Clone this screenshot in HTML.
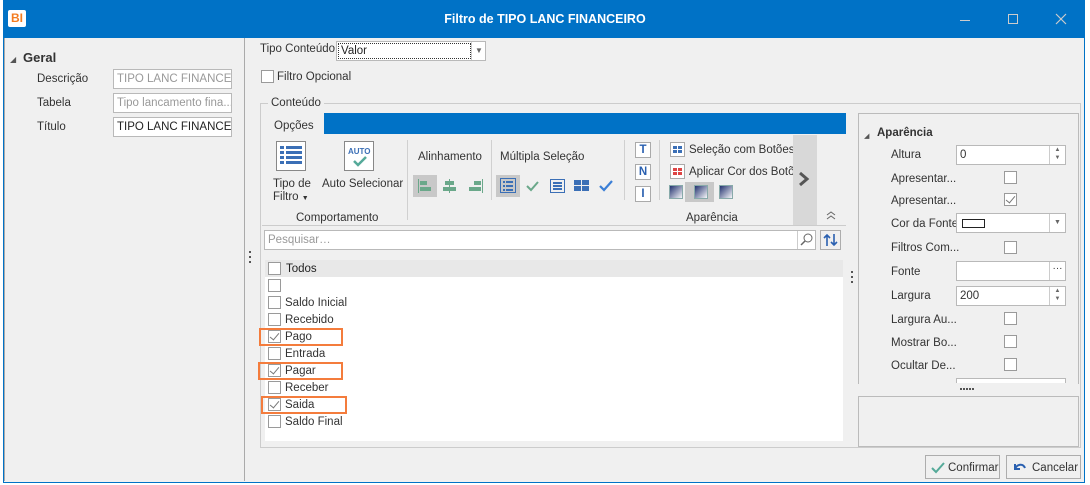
<!DOCTYPE html>
<html><head><meta charset="utf-8"><style>
*{box-sizing:border-box;margin:0;padding:0}
body{width:1090px;height:485px;position:relative;background:#fff;font-family:"Liberation Sans",sans-serif;font-size:11.5px;color:#333;overflow:hidden}
.a{position:absolute}
.t{position:absolute;white-space:nowrap;line-height:14px}
.inp{position:absolute;background:#fff;border:1px solid #b9b9b9;height:20px;overflow:hidden}
.cb{position:absolute;width:13px;height:13px;border:1px solid #9a9a9a;background:#fff}
.ck::after{content:"";position:absolute;left:3px;top:0px;width:4px;height:8px;border:solid #777;border-width:0 1.5px 1.5px 0;transform:rotate(40deg)}
.sep{position:absolute;width:1px;background:#d0d0d0}
.ob{position:absolute;border:2px solid #f47c3c}
.btn{position:absolute;border:1px solid #adadad;background:#f0f0f0}
</style></head><body>
<div class="a" style="left:3px;top:0;width:1082px;height:483px;background:#f0f0f0;border:1px solid #0072c6"></div>
<div class="a" style="left:3px;top:0;width:1082px;height:38px;background:#0072c6"></div>
<div class="a" style="left:8px;top:10px;width:18px;height:17px;background:#fff;border-radius:2px;color:#f47c20;font-weight:bold;font-size:12px;line-height:17px;text-align:center">BI</div>
<div class="t" style="left:0;width:1090px;text-align:center;top:12px;color:#fff;font-weight:bold;font-size:12.5px">Filtro de TIPO LANC FINANCEIRO</div>
<div class="a" style="left:960px;top:20px;width:10px;height:1px;background:#ccc"></div>
<div class="a" style="left:1008px;top:14px;width:10px;height:10px;border:1px solid #ccc"></div>
<svg class="a" style="left:1055px;top:13px" width="12" height="12"><path d="M1 1L11 11M11 1L1 11" stroke="#ccc" stroke-width="1.2"/></svg>
<div class="a" style="left:4px;top:38px;width:241px;height:443px;border-right:1px solid #aaa;border-left:1px solid #aaa"></div>
<div class="t" style="left:10px;top:53px;font-size:8px;color:#555">◢</div>
<div class="t" style="left:23px;top:51px;font-weight:bold;font-size:13px">Geral</div>
<div class="t" style="left:37px;top:72px">Descrição</div>
<div class="t" style="left:37px;top:96px">Tabela</div>
<div class="t" style="left:37px;top:120px">Título</div>
<div class="inp" style="left:113px;top:69px;width:119px"><span class="t" style="left:3px;top:2px;color:#999">TIPO LANC FINANCE...</span></div>
<div class="inp" style="left:113px;top:93px;width:119px"><span class="t" style="left:3px;top:2px;color:#999">Tipo lancamento fina...</span></div>
<div class="inp" style="left:113px;top:117px;width:119px"><span class="t" style="left:3px;top:2px;color:#222">TIPO LANC FINANCE...</span></div>
<div class="t" style="left:260px;top:42px">Tipo Conteúdo</div>
<div class="inp" style="left:336px;top:41px;width:150px;height:20px"><div class="a" style="left:1px;top:1px;width:133px;height:16px;border:1px dotted #333"></div><span class="t" style="left:4px;top:2px;color:#222">Valor</span><div class="a" style="left:134px;top:0;width:1px;height:18px;background:#ccc"></div><span class="t" style="left:138px;top:2px;font-size:8px;color:#666">▼</span></div>
<div class="cb" style="left:261px;top:70px"></div>
<div class="t" style="left:277px;top:70px">Filtro Opcional</div>
<div class="a" style="left:260px;top:103px;width:821px;height:345px;border:1px solid #ccc"></div>
<div class="t" style="left:268px;top:96px;background:#f0f0f0;padding:0 3px">Conteúdo</div>
<div class="t" style="left:274px;top:119px">Opções</div>
<div class="a" style="left:324px;top:113px;width:522px;height:21px;background:#0072c6"></div>
<div class="a" style="left:262px;top:225px;width:584px;height:1px;background:#ccc"></div>
<div class="a" style="left:276px;top:141px;width:30px;height:30px;border:1px solid #888;background:#fff">
<svg width="28" height="28"><g fill="#3b6fb6"><rect x="3" y="4" width="4" height="3"/><rect x="9" y="4" width="16" height="3"/><rect x="3" y="9" width="4" height="3"/><rect x="9" y="9" width="16" height="3"/><rect x="3" y="14" width="4" height="3"/><rect x="9" y="14" width="16" height="3"/><rect x="3" y="19" width="4" height="3"/><rect x="9" y="19" width="16" height="3"/></g></svg></div>
<div class="t" style="left:273px;top:177px">Tipo de</div>
<div class="t" style="left:273px;top:190px">Filtro <span style="font-size:7px">▼</span></div>
<div class="a" style="left:344px;top:141px;width:30px;height:30px;border:1px solid #888;background:#fff"><span class="t" style="left:3px;top:3px;font-size:8px;font-weight:bold;color:#3b6fb6">AUTO</span><svg class="a" style="left:7px;top:13px" width="16" height="12"><path d="M2 6l4 4 8-8" stroke="#5a9" stroke-width="2.5" fill="none"/></svg></div>
<div class="t" style="left:322px;top:177px">Auto Selecionar</div>
<div class="t" style="left:296px;top:211px">Comportamento</div>
<div class="sep" style="left:407px;top:140px;height:80px"></div>
<div class="t" style="left:418px;top:150px">Alinhamento</div>
<div class="a" style="left:413px;top:175px;width:24px;height:22px;background:#c8c8c8"></div>
<svg class="a" style="left:413px;top:175px" width="75" height="22"><g fill="#6aa88a"><rect x="5" y="4" width="1" height="14"/><rect x="7" y="6" width="7" height="4"/><rect x="7" y="12" width="11" height="4"/><rect x="36" y="4" width="1" height="14"/><rect x="32" y="6" width="9" height="4"/><rect x="30" y="12" width="13" height="4"/><rect x="69" y="4" width="1" height="14"/><rect x="61" y="6" width="7" height="4"/><rect x="56" y="12" width="12" height="4"/></g></svg>
<div class="sep" style="left:491px;top:140px;height:60px"></div>
<div class="t" style="left:500px;top:150px">Múltipla Seleção</div>
<div class="a" style="left:496px;top:175px;width:24px;height:22px;background:#c8c8c8"></div>
<svg class="a" style="left:496px;top:175px" width="125" height="22"><g fill="none" stroke="#3b6fb6"><rect x="4.5" y="3.5" width="15" height="14"/></g><g fill="#3b6fb6"><rect x="7" y="6" width="2" height="2"/><rect x="10" y="6" width="7" height="2"/><rect x="7" y="10" width="2" height="2"/><rect x="10" y="10" width="7" height="2"/><rect x="7" y="14" width="2" height="2"/><rect x="10" y="14" width="7" height="2"/></g><path d="M31 11l4 4 7-8" stroke="#6aa88a" stroke-width="2" fill="none"/><rect x="54.5" y="4.5" width="14" height="13" fill="none" stroke="#3b6fb6"/><g fill="#3b6fb6"><rect x="57" y="7" width="9" height="2"/><rect x="57" y="10" width="9" height="2"/><rect x="57" y="13" width="9" height="2"/><rect x="78" y="5" width="7" height="5"/><rect x="86" y="5" width="7" height="5"/><rect x="78" y="11" width="7" height="5"/><rect x="86" y="11" width="7" height="5"/></g><path d="M104 11l4 4 8-9" stroke="#3b7fd6" stroke-width="2.2" fill="none"/></svg>
<div class="sep" style="left:624px;top:140px;height:60px"></div>
<div class="a" style="left:635px;top:142px;width:16px;height:16px;border:1px solid #aaa;background:#fff;color:#2a60b0;font-weight:bold;text-align:center;line-height:14px">T</div>
<div class="a" style="left:635px;top:164px;width:16px;height:16px;border:1px solid #aaa;background:#fff;color:#2a60b0;font-weight:bold;text-align:center;line-height:14px">N</div>
<div class="a" style="left:635px;top:186px;width:16px;height:16px;border:1px solid #aaa;background:#fff;color:#2a60b0;font-weight:bold;text-align:center;line-height:14px">I</div>
<div class="sep" style="left:659px;top:140px;height:60px"></div>
<svg class="a" style="left:670px;top:142px" width="16" height="40"><rect x="0.5" y="0.5" width="14" height="14" fill="#fff" stroke="#aaa"/><g fill="#3b6fb6"><rect x="3" y="4" width="4" height="3"/><rect x="8" y="4" width="4" height="3"/><rect x="3" y="8" width="4" height="3"/><rect x="8" y="8" width="4" height="3"/></g><rect x="0.5" y="22.5" width="14" height="14" fill="#fff" stroke="#aaa"/><g fill="#d44"><rect x="3" y="26" width="4" height="3"/><rect x="8" y="26" width="4" height="3"/><rect x="3" y="30" width="4" height="3"/><rect x="8" y="30" width="4" height="3"/></g></svg>
<div class="t" style="left:689px;top:143px">Seleção com Botões</div>
<div class="t" style="left:689px;top:165px;width:104px;overflow:hidden">Aplicar Cor dos Botões</div>
<div class="a" style="left:685px;top:182px;width:29px;height:20px;background:#c8c8c8"></div>
<svg class="a" style="left:668px;top:184px" width="70" height="16"><defs><linearGradient id="g" x1="0" y1="0" x2="1" y2="1"><stop offset="0" stop-color="#1a2a6a"/><stop offset="1" stop-color="#fff"/></linearGradient></defs><rect x="1.5" y="1.5" width="13" height="13" fill="url(#g)" stroke="#8aa"/><rect x="26.5" y="1.5" width="13" height="13" fill="url(#g)" stroke="#8aa"/><rect x="51.5" y="1.5" width="13" height="13" fill="url(#g)" stroke="#8aa"/></svg>
<div class="t" style="left:686px;top:211px">Aparência</div>
<div class="a" style="left:793px;top:135px;width:24px;height:90px;background:#d8d8d8"></div>
<svg class="a" style="left:798px;top:171px" width="12" height="16"><path d="M2 2l7 6-7 6" stroke="#555" stroke-width="3" fill="none"/></svg>
<svg class="a" style="left:825px;top:210px" width="12" height="10"><path d="M2 5l4-3 4 3M2 9l4-3 4 3" stroke="#666" fill="none"/></svg>
<div class="inp" style="left:264px;top:230px;width:552px;height:20px"><span class="t" style="left:3px;top:2px;color:#999">Pesquisar…</span></div>
<div class="a" style="left:797px;top:231px;width:18px;height:18px;border-left:1px solid #ccc"><svg width="17" height="17"><circle cx="10" cy="7" r="4" fill="none" stroke="#666"/><path d="M7 10l-4 4" stroke="#666" stroke-width="1.5"/></svg></div>
<div class="btn" style="left:820px;top:230px;width:21px;height:20px"><svg width="19" height="18"><path d="M6 15V4M3 7l3-3 3 3M13 3v11M10 11l3 3 3-3" stroke="#2a60b0" stroke-width="1.6" fill="none"/></svg></div>
<div class="a" style="left:265px;top:260px;width:578px;height:181px;background:#fff"></div>
<div class="a" style="left:265px;top:260px;width:578px;height:17px;background:#e8e8e8"></div>
<div class="cb" style="left:268px;top:262px"></div><div class="t" style="left:286px;top:262px;color:#222">Todos</div>
<div class="cb" style="left:268px;top:279px"></div>
<div class="cb" style="left:268px;top:296px"></div><div class="t" style="left:285px;top:296px">Saldo Inicial</div>
<div class="cb" style="left:268px;top:313px"></div><div class="t" style="left:285px;top:313px">Recebido</div>
<div class="cb ck" style="left:268px;top:330px"></div><div class="t" style="left:285px;top:330px">Pago</div>
<div class="cb" style="left:268px;top:347px"></div><div class="t" style="left:285px;top:347px">Entrada</div>
<div class="cb ck" style="left:268px;top:364px"></div><div class="t" style="left:285px;top:364px">Pagar</div>
<div class="cb" style="left:268px;top:381px"></div><div class="t" style="left:285px;top:381px">Receber</div>
<div class="cb ck" style="left:268px;top:398px"></div><div class="t" style="left:285px;top:398px">Saida</div>
<div class="cb" style="left:268px;top:415px"></div><div class="t" style="left:285px;top:415px">Saldo Final</div>
<div class="ob" style="left:259px;top:328px;width:84px;height:18px"></div>
<div class="ob" style="left:258px;top:362px;width:85px;height:18px"></div>
<div class="ob" style="left:261px;top:396px;width:86px;height:18px"></div>
<svg class="a" style="left:249px;top:250px" width="3" height="16"><g fill="#555"><rect y="1" width="2" height="2"/><rect y="6" width="2" height="2"/><rect y="11" width="2" height="2"/></g></svg>
<svg class="a" style="left:851px;top:270px" width="3" height="16"><g fill="#555"><rect y="1" width="2" height="2"/><rect y="6" width="2" height="2"/><rect y="11" width="2" height="2"/></g></svg>
<div class="a" style="left:858px;top:113px;width:221px;height:271px;border:1px solid #bbb;border-bottom:none"></div>
<div class="t" style="left:864px;top:130px;font-size:7px;color:#555">◢</div>
<div class="t" style="left:877px;top:126px;font-weight:bold">Aparência</div>
<div class="t" style="left:891px;top:148px">Altura</div>
<div class="inp" style="left:956px;top:145px;width:110px"><span class="t" style="left:3px;top:2px">0</span><div class="a" style="left:92px;top:0;width:16px;height:18px;border-left:1px solid #ccc;font-size:6px;color:#666;text-align:center;line-height:8px">▲<br>▼</div></div>
<div class="t" style="left:891px;top:172px">Apresentar...</div><div class="cb" style="left:1004px;top:171px"></div>
<div class="t" style="left:891px;top:194px">Apresentar...</div><div class="cb ck" style="left:1004px;top:193px"></div>
<div class="t" style="left:891px;top:217px">Cor da Fonte</div>
<div class="inp" style="left:956px;top:213px;width:110px"><div class="a" style="left:5px;top:5px;width:23px;height:9px;border:1px solid #222"></div><div class="a" style="left:92px;top:0;width:16px;height:18px;border-left:1px solid #ccc;font-size:7px;color:#666;text-align:center;line-height:18px">▼</div></div>
<div class="t" style="left:891px;top:241px">Filtros Com...</div><div class="cb" style="left:1004px;top:241px"></div>
<div class="t" style="left:891px;top:265px">Fonte</div>
<div class="inp" style="left:956px;top:261px;width:110px"><div class="a" style="left:92px;top:0;width:16px;height:18px;border-left:1px solid #ccc;text-align:center;line-height:14px;font-size:10px">···</div></div>
<div class="t" style="left:891px;top:289px">Largura</div>
<div class="inp" style="left:956px;top:286px;width:110px"><span class="t" style="left:3px;top:2px">200</span><div class="a" style="left:92px;top:0;width:16px;height:18px;border-left:1px solid #ccc;font-size:6px;color:#666;text-align:center;line-height:8px">▲<br>▼</div></div>
<div class="t" style="left:891px;top:313px">Largura Au...</div><div class="cb" style="left:1004px;top:312px"></div>
<div class="t" style="left:891px;top:336px">Mostrar Bo...</div><div class="cb" style="left:1004px;top:335px"></div>
<div class="t" style="left:891px;top:359px">Ocultar De...</div><div class="cb" style="left:1004px;top:358px"></div>
<div class="a" style="left:956px;top:378px;width:110px;height:5px;border:1px solid #b9b9b9;border-bottom:none;background:#fff"></div>
<svg class="a" style="left:960px;top:388px" width="16" height="3"><g fill="#555"><rect x="0" width="2" height="2"/><rect x="3" width="2" height="2"/><rect x="6" width="2" height="2"/><rect x="9" width="2" height="2"/><rect x="12" width="2" height="2"/></g></svg>
<div class="a" style="left:858px;top:396px;width:221px;height:51px;border:1px solid #bbb"></div>
<div class="btn" style="left:925px;top:455px;width:75px;height:24px"><svg class="a" style="left:4px;top:5px" width="16" height="13"><path d="M2 7l4 4 8-9" stroke="#5a9" stroke-width="2" fill="none"/></svg><span class="t" style="left:22px;top:5px">Confirmar</span></div>
<div class="btn" style="left:1006px;top:455px;width:75px;height:24px"><svg class="a" style="left:4px;top:5px" width="16" height="13"><path d="M4 3v5h5M4 8C6 3 12 2 14 7" stroke="#2a60b0" stroke-width="2" fill="none"/></svg><span class="t" style="left:25px;top:5px">Cancelar</span></div>
</body></html>
